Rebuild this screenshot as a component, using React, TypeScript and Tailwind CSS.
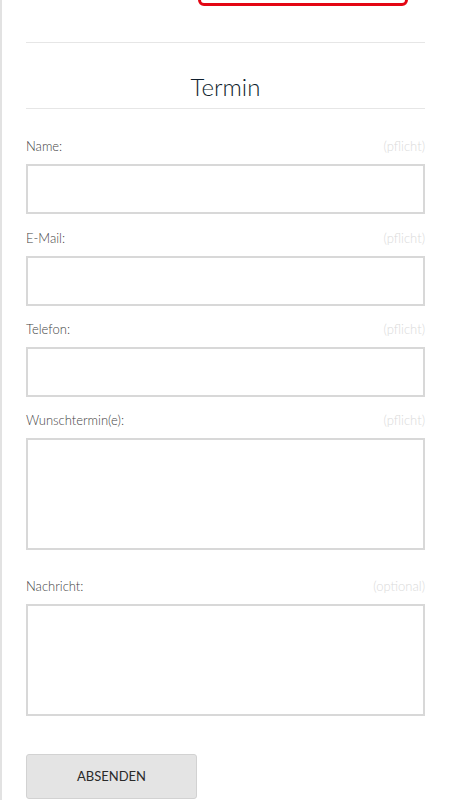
const fields = [
  { label: "Name:", hint: "(pflicht)", gap: "mb-[15px]", tall: false },
  { label: "E-Mail:", hint: "(pflicht)", gap: "mb-[14px]", tall: false },
  { label: "Telefon:", hint: "(pflicht)", gap: "mb-[14px]", tall: false },
  { label: "Wunschtermin(e):", hint: "(pflicht)", gap: "mb-[27px]", tall: true },
  { label: "Nachricht:", hint: "(optional)", gap: "mb-[27px]", tall: true },
];

export default function App() {
  return (
    <div
      className="h-[800px] overflow-hidden border-l-2 border-[#e2e2e2] bg-white"
      style={{ fontFamily: "Lato, 'Open Sans', sans-serif" }}
    >
      <div className="pl-[24px] pr-[25px]">
        <div className="ml-[172px] mt-[-34px] h-[40px] w-[210px] rounded-[6px] border-[3px] border-[#e30613]" />
        <hr className="mt-[36px] border-[#e6e6e6]" />
        <h2 className="pt-[29px] pb-[6px] text-center text-[24px] leading-[30px] font-light text-[#0f1e2d]">
          Termin
        </h2>
        <hr className="border-[#e6e6e6]" />

        <form className="pt-[28px]">
          {fields.map((f, i) => (
            <div key={i} className={f.gap}>
              <div className="flex justify-between text-[13px] leading-[18px]">
                <span className="font-light text-[#444]">{f.label}</span>
                <span className="font-light text-[#dadada]">{f.hint}</span>
              </div>
              {f.tall ? (
                <textarea className="mt-[9px] block h-[112px] w-full resize-none border-2 border-[#d8d8d8]" />
              ) : (
                <input className="mt-[9px] block h-[50px] w-full border-2 border-[#d8d8d8]" />
              )}
            </div>
          ))}
          <button
            type="button"
            className="mt-[11px] h-[45px] w-[171px] rounded-[3px] border border-[#d2d2d2] bg-[#e4e4e4] text-[13px] text-[#2a2a2a]"
          >
            ABSENDEN
          </button>
        </form>
      </div>
    </div>
  );
}
